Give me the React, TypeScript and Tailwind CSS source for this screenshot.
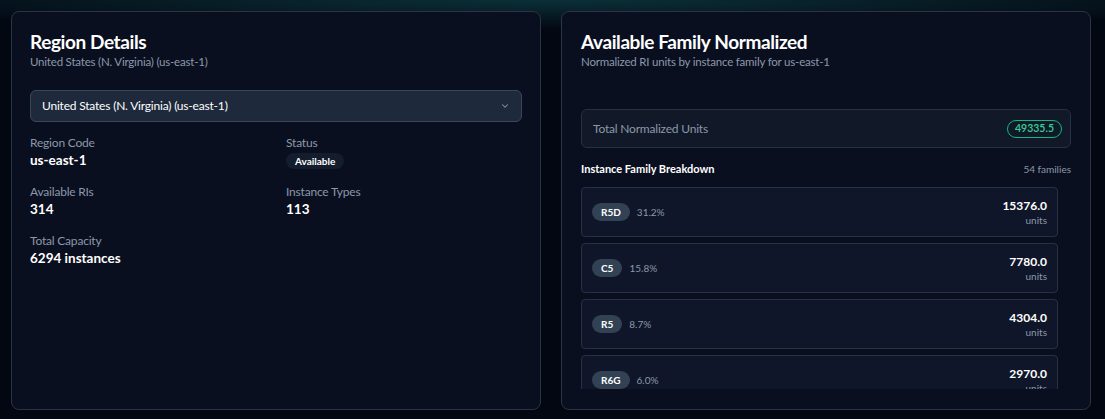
import React from 'react';

const FAMILIES = [
  { name: 'R5D', pct: '31.2%', units: '15376.0' },
  { name: 'C5', pct: '15.8%', units: '7780.0' },
  { name: 'R5', pct: '8.7%', units: '4304.0' },
  { name: 'R6G', pct: '6.0%', units: '2970.0' },
  { name: 'M5', pct: '5.1%', units: '2512.0' },
];

const DETAILS = [
  { label: 'Region Code', value: 'us-east-1' },
  { label: 'Status', badge: 'Available' },
  { label: 'Available RIs', value: '314' },
  { label: 'Instance Types', value: '113' },
  { label: 'Total Capacity', value: '6294 instances' },
];

const App: React.FC = () => {
  return (
    <div
      className="h-[419px] w-full overflow-hidden bg-[#030712] bg-[radial-gradient(ellipse_70%_30px_at_50%_0%,#0b3038,transparent)] flex gap-5 pl-[11px] pt-[11px] pb-[9px] text-white"
      style={{ fontFamily: 'Lato, "Noto Sans", sans-serif' }}
    >
      <div className="w-[530px] shrink-0 rounded-lg border border-[#2a3444] bg-[#0a0f1f] px-[18px] pt-[18px] flex flex-col">
        <h2 className="text-[19px] leading-[24px] font-bold tracking-[-0.4px]">Region Details</h2>
        <p className="mt-[1px] text-[11.5px] leading-[14px] text-[#8b98ab] tracking-[-0.2px]">United States (N. Virginia) (us-east-1)</p>
        <button className="mt-[21px] h-[32px] w-full rounded-md border border-[#3a4658] bg-[#1e293b] flex items-center justify-between px-[11px] text-[12px] tracking-[-0.2px] text-white">
          <span>United States (N. Virginia) (us-east-1)</span>
          <svg width="10" height="10" viewBox="0 0 24 24" fill="none" stroke="#8b98ab" strokeWidth="2.5" strokeLinecap="round" strokeLinejoin="round">
            <path d="m6 9 6 6 6-6" />
          </svg>
        </button>
        <div className="mt-[13px] grid grid-cols-2 gap-y-[15px] gap-x-5">
          {DETAILS.map(d => (
            <div key={d.label} className="flex flex-col">
              <div className="text-[12px] leading-[16px] text-[#8b98ab] tracking-[-0.2px]">{d.label}</div>
              {d.badge ? (
                <div className="mt-[2px] h-[16px] w-fit flex items-center rounded-full bg-[#141d2e] px-[9px] text-[10px] font-bold">{d.badge}</div>
              ) : (
                <div className="text-[13.5px] leading-[18px] font-bold">{d.value}</div>
              )}
            </div>
          ))}
        </div>
      </div>

      <div className="w-[530px] shrink-0 rounded-lg border border-[#2a3444] bg-[#0a0f1f] px-[19px] pt-[18px] pb-5 flex flex-col">
        <h2 className="text-[19px] leading-[24px] font-bold tracking-[-0.4px]">Available Family Normalized</h2>
        <p className="mt-[1px] text-[11.5px] leading-[14px] text-[#8b98ab] tracking-[-0.2px]">Normalized RI units by instance family for us-east-1</p>
        <div className="mt-[40px] h-[39px] rounded-md border border-[#273142] bg-[#111827] flex items-center justify-between pl-[11px] pr-[8px]">
          <span className="text-[12px] text-[#8b98ab] tracking-[-0.2px]">Total Normalized Units</span>
          <span className="h-[18px] inline-flex items-center rounded-full border border-[#10b981] px-[7px] text-[10.5px] font-semibold text-[#34d399]">49335.5</span>
        </div>
        <div className="mt-[13px] flex items-center justify-between">
          <span className="text-[11px] leading-[16px] font-bold">Instance Family Breakdown</span>
          <span className="text-[10px] text-[#8b98ab]">54 families</span>
        </div>
        <div className="mt-[10px] flex-1 min-h-0 overflow-hidden pr-[13px] flex flex-col gap-[6px]">
          {FAMILIES.map(f => (
            <div key={f.name} className="shrink-0 h-[50px] rounded-[4px] border border-[#273142] bg-[#0f1629] flex items-center justify-between px-[10px]">
              <div className="flex items-center gap-[7px]">
                <span className="h-[18px] inline-flex items-center rounded-full bg-[#334155] px-[9px] text-[10px] font-bold">{f.name}</span>
                <span className="text-[10px] text-[#8b98ab]">{f.pct}</span>
              </div>
              <div className="text-right">
                <div className="text-[12px] leading-[15px] font-bold">{f.units}</div>
                <div className="text-[10px] leading-[14px] text-[#8b98ab]">units</div>
              </div>
            </div>
          ))}
        </div>
      </div>
    </div>
  );
};

export default App;
